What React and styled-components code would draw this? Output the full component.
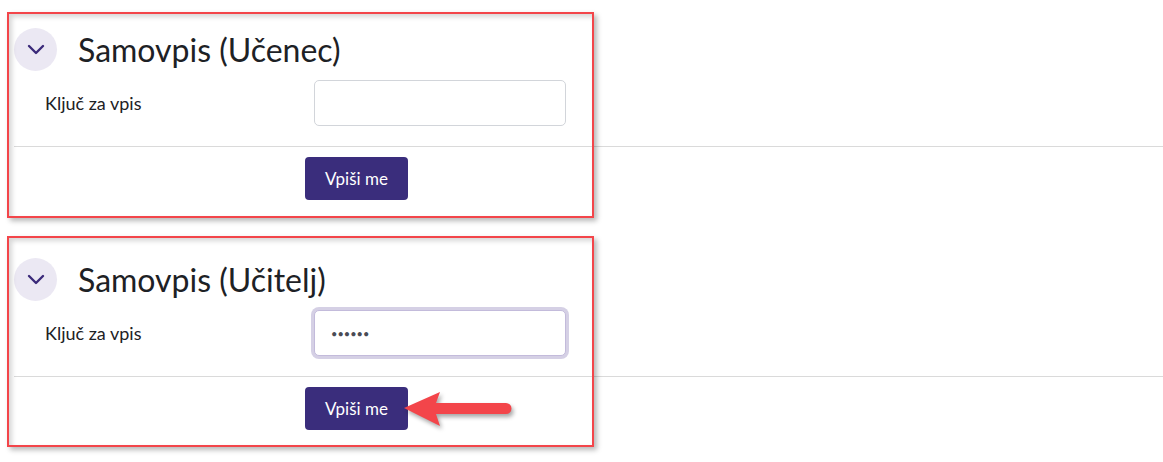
import React from 'react';
import styled, { createGlobalStyle } from 'styled-components';

const GlobalStyle = createGlobalStyle`
    body {
        margin: 0;
        background: #ffffff;
        font-family: Lato, "Open Sans", sans-serif;
        color: #1d2125;
    }
`;

const Page = styled.main`
    padding: 28px 0 31px;
`;

const Section = styled.section`
    position: relative;
    margin-bottom: 58px;
    &:last-child {
        margin-bottom: 0;
    }
`;

const Header = styled.div`
    display: flex;
    align-items: center;
    gap: 21px;
    padding-left: 14px;
    height: 43px;
`;

const Toggle = styled.span`
    display: flex;
    align-items: center;
    justify-content: center;
    width: 43px;
    height: 43px;
    border-radius: 50%;
    background: #ebe8f3;
`;

const Title = styled.h3`
    margin: 0;
    font-size: 32px;
    font-weight: 400;
    line-height: 1;
`;

const FormRow = styled.div`
    display: grid;
    grid-template-columns: 269px 252px;
    align-items: center;
    margin-top: 9px;
    padding-left: 45px;
`;

const Label = styled.label`
    font-size: 18px;
`;

const Input = styled.input`
    box-sizing: border-box;
    width: 252px;
    height: 46px;
    padding: 0 16px;
    border: 1px solid ${props => (props.$focused ? '#c3bbdb' : '#d2d5da')};
    border-radius: 5px;
    box-shadow: ${props => (props.$focused ? '0 0 0 3px #d5d0e5' : 'none')};
    font-family: Lato, sans-serif;
    font-size: 11px;
    color: #4a4b55;
    outline: none;
    background: #fff;
`;

const Divider = styled.hr`
    margin: 20px 0 0 14px;
    border: 0;
    border-top: 1px solid #dadada;
`;

const ButtonRow = styled.div`
    padding: 10px 0 0 305px;
`;

const Button = styled.button`
    height: 43px;
    padding: 0 20px;
    border: 0;
    border-radius: 4px;
    background: #3a2d7c;
    color: #ffffff;
    font-family: Lato, sans-serif;
    font-size: 17px;
`;

const Annotation = styled.div`
    position: absolute;
    left: 7px;
    top: ${props => props.$top}px;
    bottom: ${props => props.$bottom}px;
    width: 587px;
    box-sizing: border-box;
    border: 2px solid #f3454a;
    box-shadow: 3px 3px 5px rgba(0, 0, 0, 0.28), inset 3px 3px 5px rgba(0, 0, 0, 0.16);
    pointer-events: none;
`;

const Arrow = styled.svg`
    position: absolute;
    left: 400px;
    top: 130px;
    filter: drop-shadow(2px 3px 2px rgba(0, 0, 0, 0.35));
    pointer-events: none;
`;

const Chevron = () => (
    <svg width="18" height="11" viewBox="0 0 18 11">
        <polyline points="2,2 9,9 16,2" fill="none" stroke="#3b2a7a" strokeWidth="2.4" strokeLinecap="round" strokeLinejoin="round" />
    </svg>
);

const EnrolSection = ({ title, focused, top, bottom, children }) => (
    <Section>
        <Header>
            <Toggle>
                <Chevron />
            </Toggle>
            <Title>{title}</Title>
        </Header>
        <FormRow>
            <Label>Ključ za vpis</Label>
            {focused ? (
                <Input $focused type="text" readOnly value="••••••" />
            ) : (
                <Input type="text" readOnly value="" />
            )}
        </FormRow>
        <Divider />
        <ButtonRow>
            <Button>Vpiši me</Button>
        </ButtonRow>
        <Annotation $top={top} $bottom={bottom} />
        {children}
    </Section>
);

const App = () => {
    return (
        <>
            <GlobalStyle />
            <Page>
                <EnrolSection title="Samovpis (Učenec)" top={-16} bottom={-18} />
                <EnrolSection title="Samovpis (Učitelj)" focused top={-22} bottom={-17}>
                    <Arrow width="116" height="42" viewBox="0 0 116 42">
                        <path
                            d="M4 20 L40 4 L36 15 L106 15 A5.5 5.5 0 0 1 106 26 L36 26 L40 38 Z"
                            fill="#f3454a"
                        />
                    </Arrow>
                </EnrolSection>
            </Page>
        </>
    );
};

export default App;
